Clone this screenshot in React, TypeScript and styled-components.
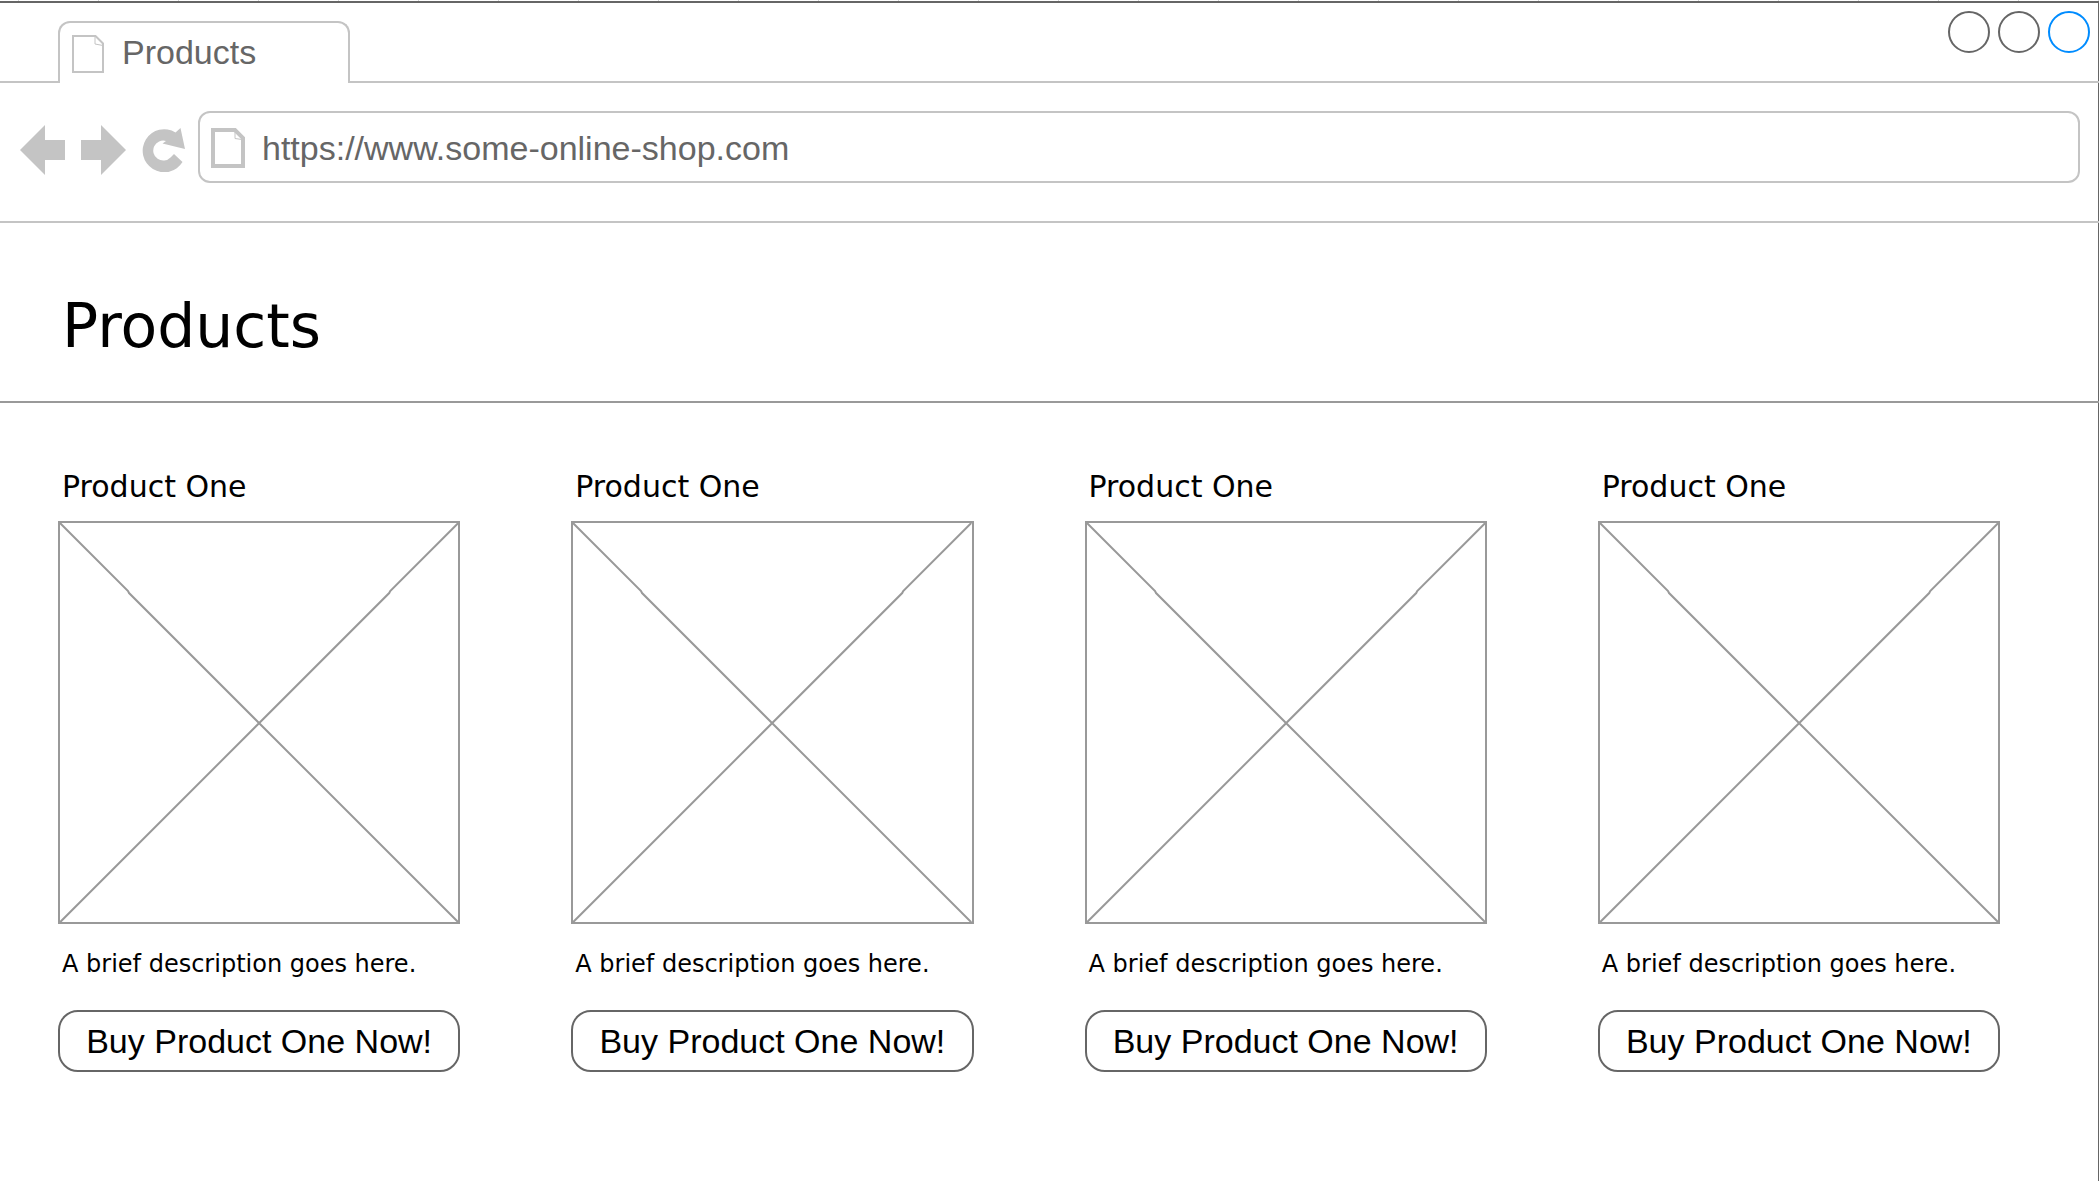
import React from 'react';
import styled, { createGlobalStyle } from 'styled-components';

const GlobalStyle = createGlobalStyle`
  *, *::before, *::after { box-sizing: border-box; }
  body {
    margin: 0;
    background: #fff;
    color: #000;
    font-family: 'Liberation Sans', Arial, sans-serif;
  }
  h1, h2, p { margin: 0; font-weight: 400; }
  button, input { font: inherit; color: inherit; background: none; padding: 0; margin: 0; }
  svg { display: block; flex: none; }
`;

const Window = styled.div`
  min-height: 100vh;
  border-right: 1px solid #666;
  display: flex;
  flex-direction: column;
`;

const CanvasRuler = styled.div`
  height: 1px;
  margin-right: -1px;
  background: repeating-linear-gradient(to right, #fff 0 18px, #d4d4d4 18px 19px, #fff 19px 80px);
`;

const TabStrip = styled.header`
  margin-right: -1px;
  border-top: 2px solid #666;
  display: flex;
  align-items: flex-end;
  height: 82px;
`;

const StripLine = styled.div<{ $grow?: boolean }>`
  flex: ${p => (p.$grow ? '1 1 auto' : '0 0 58px')};
  align-self: stretch;
  border-bottom: 2px solid #c4c4c4;
  display: flex;
  justify-content: flex-end;
  gap: 8px;
  padding: 8px 9px 0 0;
`;

const Tab = styled.div`
  width: 292px;
  height: 62px;
  border: 2px solid #c4c4c4;
  border-bottom: 0;
  border-radius: 12px 12px 0 0;
  display: flex;
  align-items: center;
  gap: 18px;
  padding: 2px 12px 0;
`;

const TabTitle = styled.span`
  font-size: 34px;
  line-height: 40px;
  padding-bottom: 4px;
  color: #666;
`;

const WindowButton = styled.button<{ $color: string }>`
  width: 42px;
  height: 42px;
  border: 2px solid ${p => p.$color};
  border-radius: 50%;
`;

const Toolbar = styled.nav`
  margin-right: -1px;
  display: flex;
  align-items: center;
  padding: 28px 19px 38px 20px;
  border-bottom: 2px solid #c4c4c4;
`;

const ToolButtons = styled.div`
  display: flex;
  align-items: center;
  gap: 16px;
  padding-top: 6px;
  margin-right: 12px;
`;

const ToolButton = styled.button`
  border: 0;
  color: #c4c4c4;
`;

const AddressBar = styled.label`
  flex: 1;
  min-width: 0;
  height: 72px;
  border: 2px solid #c4c4c4;
  border-radius: 12px;
  display: flex;
  align-items: center;
  gap: 17px;
  padding: 2px 11px 0;
`;

const AddressInput = styled.input`
  flex: 1;
  min-width: 0;
  border: 0;
  outline: 0;
  font-size: 34px;
  line-height: 40px;
  color: #666;
`;

const PageHeader = styled.header`
  margin-right: -1px;
  padding: 68px 62px 40px;
  border-bottom: 2px solid #999;
`;

const PageTitle = styled.h1`
  font-family: 'DejaVu Sans', Verdana, sans-serif;
  font-size: 60px;
  line-height: 70px;
`;

const ProductGrid = styled.main`
  display: grid;
  grid-template-columns: repeat(4, minmax(0, 1fr));
  gap: 111px;
  padding: 64px 98px 64px 58px;
`;

const Card = styled.article`
  display: flex;
  flex-direction: column;
`;

const CardTitle = styled.h2`
  font-family: 'DejaVu Sans', Verdana, sans-serif;
  font-size: 30px;
  line-height: 40px;
  padding-left: 4px;
  margin-bottom: 14px;
`;

const ImageBox = styled.div`
  aspect-ratio: 402 / 403;
  border: 2px solid #999;
  svg { width: 100%; height: 100%; }
`;

const Description = styled.p`
  font-family: 'DejaVu Sans', Verdana, sans-serif;
  font-size: 24px;
  line-height: 30px;
  padding-left: 4px;
  margin: 25px 0 31px;
`;

const BuyButton = styled.button`
  height: 62px;
  border: 2px solid #666;
  border-radius: 20px;
  font-size: 34px;
  line-height: 40px;
  white-space: nowrap;
`;

const Placeholder = () => (
  <ImageBox role="img" aria-label="Product image">
    <svg viewBox="0 0 398 399" preserveAspectRatio="none" fill="none" stroke="#999" strokeWidth="2">
      <path d="M0 0 68 68 69 70 398 399M398 0 330 68 329 70 0 399" />
    </svg>
  </ImageBox>
);

const products = [1, 2, 3, 4].map(id => ({
  id,
  name: 'Product One',
  description: 'A brief description goes here.',
}));

export default function App() {
  return (
    <Window>
      <GlobalStyle />
      <CanvasRuler />
      <TabStrip>
        <StripLine />
        <Tab>
          <svg width="32" height="38" viewBox="0 0 32 38" fill="none" stroke="#c4c4c4" strokeWidth="2">
            <path d="M1 1H23.500L31 8.500V37H1Z" />
            <path d="M23 1V9L31 10.500" strokeWidth="1" />
          </svg>
          <TabTitle>Products</TabTitle>
        </Tab>
        <StripLine $grow>
          <WindowButton $color="#666" aria-label="Minimize" />
          <WindowButton $color="#666" aria-label="Maximize" />
          <WindowButton $color="#008cff" aria-label="Close" />
        </StripLine>
      </TabStrip>
      <Toolbar>
        <ToolButtons>
          <ToolButton aria-label="Back">
            <svg width="45" height="50" viewBox="0 0 45 50" fill="currentColor">
              <path d="M0 25 25 0V15H45V35H25V50Z" />
            </svg>
          </ToolButton>
          <ToolButton aria-label="Forward">
            <svg width="45" height="50" viewBox="0 0 45 50" fill="currentColor">
              <path d="M45 25 20 0V15H0V35H20V50Z" />
            </svg>
          </ToolButton>
          <ToolButton aria-label="Reload">
            <svg width="44" height="44" viewBox="0 0 44 44" fill="currentColor">
              <path d="M33.500 4.500 38.500 0 43 21 20.500 15.500 24 13A10 10 0 1 0 28.500 29.500L32 26 40.500 34A21.500 21.500 0 1 1 33.500 4.500Z" />
            </svg>
          </ToolButton>
        </ToolButtons>
        <AddressBar>
          <svg width="34" height="40" viewBox="0 0 34 40" fill="none" stroke="#c4c4c4">
            <path d="M2 2H24L32 10V38H2Z" strokeWidth="4" />
            <path d="M24 3V10.500L31 11.500" />
          </svg>
          <AddressInput type="text" aria-label="Address" defaultValue="https://www.some-online-shop.com" />
        </AddressBar>
      </Toolbar>
      <PageHeader>
        <PageTitle>Products</PageTitle>
      </PageHeader>
      <ProductGrid>
        {products.map(p => (
          <Card key={p.id}>
            <CardTitle>{p.name}</CardTitle>
            <Placeholder />
            <Description>{p.description}</Description>
            <BuyButton type="button">Buy {p.name} Now!</BuyButton>
          </Card>
        ))}
      </ProductGrid>
    </Window>
  );
}
